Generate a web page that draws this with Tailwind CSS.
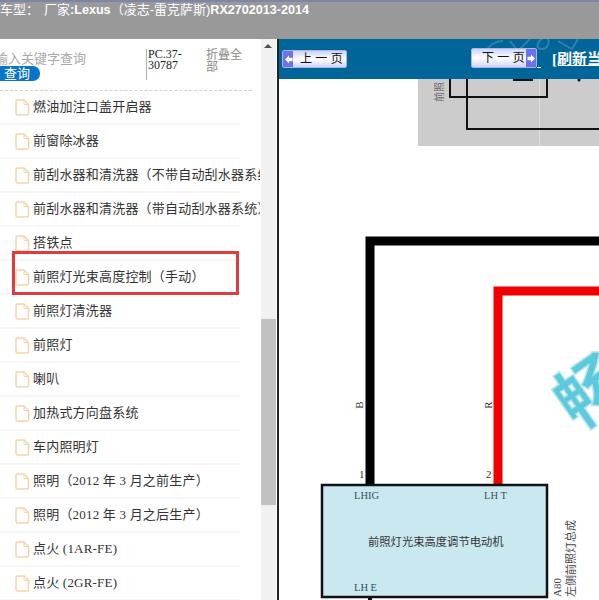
<!DOCTYPE html>
<html lang="zh">
<head>
    <meta charset="UTF-8">
    <title>维修手册</title>
    <script src="https://cdn.jsdelivr.net/npm/@tailwindcss/browser@4"></script>
</head>
<body class="bg-white overflow-hidden font-['Liberation_Sans','Noto_Sans_CJK_SC',sans-serif]">
<div class="w-[599px] h-[600px] flex flex-col overflow-hidden">
    <!-- Top bar -->
    <header class="h-[39px] shrink-0 bg-[#999999] border-t-2 border-[#7c87a8] text-white text-[12.6px] font-bold leading-[15px] whitespace-nowrap">
        <span class="font-normal text-[13px]">车型：</span><span class="font-normal text-[13px] ml-[5px]">厂家</span>:Lexus<span class="font-normal text-[13px]">（凌志-雷克萨斯)</span>RX2702013-2014
    </header>

    <div class="flex flex-1 min-h-0">
        <!-- Sidebar -->
        <aside class="w-[277px] shrink-0 flex relative overflow-hidden">
            <div class="w-[260px] shrink-0 overflow-hidden">
                <div class="h-[52px] w-[252px] border-b border-dashed border-[#cfcfcf] relative">
                    <span class="absolute left-[-5px] top-[12px] text-[13px] leading-[16px] text-[#a9a9a9] whitespace-nowrap">输入关键字查询</span>
                    <span class="absolute left-0 top-[27px] w-[40px] h-[15px] bg-[#0a74c9] rounded-r-[7px] text-white text-[13px] leading-[15px] pl-1">查询</span>
                    <div class="absolute left-[146px] top-[10px] h-[31px] w-[44px] border-l border-[#aab0c8] pl-[1px] font-['Liberation_Serif','Noto_Sans_CJK_SC',serif] text-[12px] leading-[11px] text-[#222]">PC.37-<br>30787</div>
                    <div class="absolute left-[206px] top-[10px] w-[38px] text-[12px] leading-[12px] text-[#8a8a8a]">折叠全部</div>
                </div>
                <ul class="w-[240px] text-[13px] tracking-[0.2px] text-[#333] font-['Liberation_Serif','Noto_Sans_CJK_SC',serif]">
                    <li class="h-[34px] flex items-center gap-[3px] pl-[15px] border-b-2 border-[#f5f5f5] whitespace-nowrap"><svg class="shrink-0" width="15" height="17" viewBox="0 0 15 17" fill="none"><path d="M2.5 1h6.5l4.500 4.500v9a1.500 1.500 0 0 1-1.500 1.500h-9.500a1.500 1.500 0 0 1-1.500-1.500v-12a1.500 1.500 0 0 1 1.500-1.500z" stroke="#f6d3a8" stroke-width="1.500"/><path d="M9 1v4.500h4.500" stroke="#f6d3a8"/></svg><span>燃油加注口盖开启器</span></li>
                    <li class="h-[34px] flex items-center gap-[3px] pl-[15px] border-b-2 border-[#f5f5f5] whitespace-nowrap"><svg class="shrink-0" width="15" height="17" viewBox="0 0 15 17" fill="none"><path d="M2.5 1h6.5l4.500 4.500v9a1.500 1.500 0 0 1-1.500 1.500h-9.500a1.500 1.500 0 0 1-1.500-1.500v-12a1.500 1.500 0 0 1 1.500-1.500z" stroke="#f6d3a8" stroke-width="1.500"/><path d="M9 1v4.500h4.500" stroke="#f6d3a8"/></svg><span>前窗除冰器</span></li>
                    <li class="h-[34px] flex items-center gap-[3px] pl-[15px] border-b-2 border-[#f5f5f5] whitespace-nowrap"><svg class="shrink-0" width="15" height="17" viewBox="0 0 15 17" fill="none"><path d="M2.5 1h6.5l4.500 4.500v9a1.500 1.500 0 0 1-1.500 1.500h-9.500a1.500 1.500 0 0 1-1.500-1.500v-12a1.500 1.500 0 0 1 1.500-1.500z" stroke="#f6d3a8" stroke-width="1.500"/><path d="M9 1v4.500h4.500" stroke="#f6d3a8"/></svg><span>前刮水器和清洗器（不带自动刮水器系统）</span></li>
                    <li class="h-[34px] flex items-center gap-[3px] pl-[15px] border-b-2 border-[#f5f5f5] whitespace-nowrap"><svg class="shrink-0" width="15" height="17" viewBox="0 0 15 17" fill="none"><path d="M2.5 1h6.5l4.500 4.500v9a1.500 1.500 0 0 1-1.500 1.500h-9.500a1.500 1.500 0 0 1-1.500-1.500v-12a1.500 1.500 0 0 1 1.500-1.500z" stroke="#f6d3a8" stroke-width="1.500"/><path d="M9 1v4.500h4.500" stroke="#f6d3a8"/></svg><span>前刮水器和清洗器（带自动刮水器系统）</span></li>
                    <li class="h-[34px] flex items-center gap-[3px] pl-[15px] border-b-2 border-[#f5f5f5] whitespace-nowrap"><svg class="shrink-0" width="15" height="17" viewBox="0 0 15 17" fill="none"><path d="M2.5 1h6.5l4.500 4.500v9a1.500 1.500 0 0 1-1.500 1.500h-9.500a1.500 1.500 0 0 1-1.500-1.500v-12a1.500 1.500 0 0 1 1.500-1.500z" stroke="#f6d3a8" stroke-width="1.500"/><path d="M9 1v4.500h4.500" stroke="#f6d3a8"/></svg><span>搭铁点</span></li>
                    <li class="h-[34px] flex items-center gap-[3px] pl-[15px] border-b-2 border-[#f5f5f5] whitespace-nowrap"><svg class="shrink-0" width="15" height="17" viewBox="0 0 15 17" fill="none"><path d="M2.5 1h6.5l4.500 4.500v9a1.500 1.500 0 0 1-1.500 1.500h-9.500a1.500 1.500 0 0 1-1.500-1.500v-12a1.500 1.500 0 0 1 1.500-1.500z" stroke="#f6d3a8" stroke-width="1.500"/><path d="M9 1v4.500h4.500" stroke="#f6d3a8"/></svg><span>前照灯光束高度控制（手动）</span></li>
                    <li class="h-[34px] flex items-center gap-[3px] pl-[15px] border-b-2 border-[#f5f5f5] whitespace-nowrap"><svg class="shrink-0" width="15" height="17" viewBox="0 0 15 17" fill="none"><path d="M2.5 1h6.5l4.500 4.500v9a1.500 1.500 0 0 1-1.500 1.500h-9.500a1.500 1.500 0 0 1-1.500-1.500v-12a1.500 1.500 0 0 1 1.500-1.500z" stroke="#f6d3a8" stroke-width="1.500"/><path d="M9 1v4.500h4.500" stroke="#f6d3a8"/></svg><span>前照灯清洗器</span></li>
                    <li class="h-[34px] flex items-center gap-[3px] pl-[15px] border-b-2 border-[#f5f5f5] whitespace-nowrap"><svg class="shrink-0" width="15" height="17" viewBox="0 0 15 17" fill="none"><path d="M2.5 1h6.5l4.500 4.500v9a1.500 1.500 0 0 1-1.500 1.500h-9.500a1.500 1.500 0 0 1-1.500-1.500v-12a1.500 1.500 0 0 1 1.500-1.500z" stroke="#f6d3a8" stroke-width="1.500"/><path d="M9 1v4.500h4.500" stroke="#f6d3a8"/></svg><span>前照灯</span></li>
                    <li class="h-[34px] flex items-center gap-[3px] pl-[15px] border-b-2 border-[#f5f5f5] whitespace-nowrap"><svg class="shrink-0" width="15" height="17" viewBox="0 0 15 17" fill="none"><path d="M2.5 1h6.5l4.500 4.500v9a1.500 1.500 0 0 1-1.500 1.500h-9.500a1.500 1.500 0 0 1-1.500-1.500v-12a1.500 1.500 0 0 1 1.500-1.500z" stroke="#f6d3a8" stroke-width="1.500"/><path d="M9 1v4.500h4.500" stroke="#f6d3a8"/></svg><span>喇叭</span></li>
                    <li class="h-[34px] flex items-center gap-[3px] pl-[15px] border-b-2 border-[#f5f5f5] whitespace-nowrap"><svg class="shrink-0" width="15" height="17" viewBox="0 0 15 17" fill="none"><path d="M2.5 1h6.5l4.500 4.500v9a1.500 1.500 0 0 1-1.500 1.500h-9.500a1.500 1.500 0 0 1-1.500-1.500v-12a1.500 1.500 0 0 1 1.500-1.500z" stroke="#f6d3a8" stroke-width="1.500"/><path d="M9 1v4.500h4.500" stroke="#f6d3a8"/></svg><span>加热式方向盘系统</span></li>
                    <li class="h-[34px] flex items-center gap-[3px] pl-[15px] border-b-2 border-[#f5f5f5] whitespace-nowrap"><svg class="shrink-0" width="15" height="17" viewBox="0 0 15 17" fill="none"><path d="M2.5 1h6.5l4.500 4.500v9a1.500 1.500 0 0 1-1.500 1.500h-9.500a1.500 1.500 0 0 1-1.500-1.500v-12a1.500 1.500 0 0 1 1.500-1.500z" stroke="#f6d3a8" stroke-width="1.500"/><path d="M9 1v4.500h4.500" stroke="#f6d3a8"/></svg><span>车内照明灯</span></li>
                    <li class="h-[34px] flex items-center gap-[3px] pl-[15px] border-b-2 border-[#f5f5f5] whitespace-nowrap"><svg class="shrink-0" width="15" height="17" viewBox="0 0 15 17" fill="none"><path d="M2.5 1h6.5l4.500 4.500v9a1.500 1.500 0 0 1-1.500 1.500h-9.500a1.500 1.500 0 0 1-1.500-1.500v-12a1.500 1.500 0 0 1 1.500-1.500z" stroke="#f6d3a8" stroke-width="1.500"/><path d="M9 1v4.500h4.500" stroke="#f6d3a8"/></svg><span>照明（2012 年 3 月之前生产）</span></li>
                    <li class="h-[34px] flex items-center gap-[3px] pl-[15px] border-b-2 border-[#f5f5f5] whitespace-nowrap"><svg class="shrink-0" width="15" height="17" viewBox="0 0 15 17" fill="none"><path d="M2.5 1h6.5l4.500 4.500v9a1.500 1.500 0 0 1-1.500 1.500h-9.500a1.500 1.500 0 0 1-1.500-1.500v-12a1.500 1.500 0 0 1 1.500-1.500z" stroke="#f6d3a8" stroke-width="1.500"/><path d="M9 1v4.500h4.500" stroke="#f6d3a8"/></svg><span>照明（2012 年 3 月之后生产）</span></li>
                    <li class="h-[34px] flex items-center gap-[3px] pl-[15px] border-b-2 border-[#f5f5f5] whitespace-nowrap"><svg class="shrink-0" width="15" height="17" viewBox="0 0 15 17" fill="none"><path d="M2.5 1h6.5l4.500 4.500v9a1.500 1.500 0 0 1-1.500 1.500h-9.500a1.500 1.500 0 0 1-1.500-1.500v-12a1.500 1.500 0 0 1 1.500-1.500z" stroke="#f6d3a8" stroke-width="1.500"/><path d="M9 1v4.500h4.500" stroke="#f6d3a8"/></svg><span>点火 (1AR-FE)</span></li>
                    <li class="h-[34px] flex items-center gap-[3px] pl-[15px] border-b-2 border-[#f5f5f5] whitespace-nowrap"><svg class="shrink-0" width="15" height="17" viewBox="0 0 15 17" fill="none"><path d="M2.5 1h6.5l4.500 4.500v9a1.500 1.500 0 0 1-1.500 1.500h-9.500a1.500 1.500 0 0 1-1.500-1.500v-12a1.500 1.500 0 0 1 1.500-1.500z" stroke="#f6d3a8" stroke-width="1.500"/><path d="M9 1v4.500h4.500" stroke="#f6d3a8"/></svg><span>点火 (2GR-FE)</span></li>
                </ul>
            </div>
            <!-- Scrollbar -->
            <div class="w-[15px] ml-[1px] bg-[#f1f1f1] relative shrink-0">
                <div class="absolute left-[3px] top-[5px] w-0 h-0 border-x-[4px] border-b-[4px] border-x-transparent border-b-[#505050]"></div>
                <div class="absolute left-0 top-[280px] w-[15px] h-[186px] bg-[#c1c1c1]"></div>
            </div>
            <!-- Red highlight -->
            <div class="absolute left-[12px] top-[212px] w-[227px] h-[44px] border-[3px] border-[#e23b3f]"></div>
        </aside>

        <!-- Main content -->
        <main class="flex-1 min-w-0 border-l-2 border-[#222] flex flex-col relative overflow-hidden">
            <div class="h-[40px] shrink-0 bg-[#006699] flex items-center pl-[3px] relative z-10 overflow-hidden">
                <svg class="absolute left-[205px] top-0" width="100" height="14" viewBox="0 0 100 14" fill="none" stroke="#ffffff" stroke-opacity="0.18" stroke-width="2"><path d="M1 14c4-8 10-12 18-12M26 2l8 10 12-12M58 0c-6 4-6 10 0 10 5 0 8-5 6-10M74 2l14 8 6-10"/></svg>
                <button class="w-[65px] h-[18px] shrink-0 flex items-center rounded-[2px] border border-[#aab4ee] bg-gradient-to-b from-[#cfd4f8] via-white to-[#cfd4f8] text-[12px] leading-none text-[#111]">
                    <span class="w-[10px] h-full shrink-0 bg-[#6a73ea] flex items-center justify-center"><svg width="9" height="9" viewBox="0 0 9 9"><path d="M5 .5 1 4.500l4 4V6.300h3.500V2.700H5z" fill="#fff"/></svg></span>
                    <span class="ml-[7px] whitespace-nowrap">上 一 页</span>
                </button>
                <button class="relative top-[-1px] ml-[124px] w-[66px] h-[20px] shrink-0 flex items-center rounded-[2px] border border-[#aab4ee] bg-gradient-to-b from-[#cfd4f8] via-white to-[#cfd4f8] text-[12px] leading-none text-[#111]">
                    <span class="ml-[10px] whitespace-nowrap">下 一 页</span>
                    <span class="ml-auto w-[10px] h-full shrink-0 bg-[#6a73ea] flex items-center justify-center"><svg width="9" height="9" viewBox="0 0 9 9"><path d="M4 .5 8 4.500l-4 4V6.300H.5V2.700H4z" fill="#fff"/></svg></span>
                </button>
                <span class="w-[4px] h-px shrink-0 bg-white self-end mb-[11px]"></span>
                <a class="ml-[11px] shrink-0 text-white underline font-bold text-[15px] whitespace-nowrap font-['Liberation_Serif','Noto_Sans_CJK_SC',serif]">[刷新当前页]</a>
            </div>
            <svg class="flex-1 block" width="320" height="521" viewBox="279 79 320 521" font-family="'Liberation Serif','Noto Sans CJK SC',serif">
                <rect x="418" y="79" width="181" height="67" fill="#cccccc"/>
                <rect x="539" y="79" width="1" height="67" fill="#dedede"/>
                <text transform="translate(443 92) rotate(-90)" font-size="10" fill="#666" text-anchor="middle">前照</text>
                <path d="M450 79v18h97v-18M467 79v50h132" fill="none" stroke="#111" stroke-width="2"/>
                <path d="M513 80h20" stroke="#111" stroke-width="2"/>
                <circle cx="579" cy="80" r="1.500" fill="#111"/>
                <path d="M370 484v-243h229" fill="none" stroke="#000" stroke-width="9"/>
                <path d="M498 484v-193h101" fill="none" stroke="#f00000" stroke-width="9"/>
                <text transform="translate(363 405) rotate(-90)" font-size="11" fill="#333" text-anchor="middle">B</text>
                <text transform="translate(492 405) rotate(-90)" font-size="11" fill="#333" text-anchor="middle">R</text>
                <text x="359" y="478" font-size="11" fill="#333">1</text>
                <text x="486" y="478" font-size="11" fill="#333">2</text>
                <rect x="322" y="485" width="225" height="112" fill="#c9e8f0" stroke="#111" stroke-width="2.500"/>
                <text x="354" y="499" font-size="10.500" fill="#35505c">LHIG</text>
                <text x="484" y="499" font-size="10.500" fill="#35505c">LH  T</text>
                <text x="368" y="546" font-size="11.300" fill="#333">前照灯光束高度调节电动机</text>
                <text x="354" y="591" font-size="10.500" fill="#35505c">LH  E</text>
                <text transform="translate(575 597) rotate(-90)" font-size="11" fill="#444">左侧前照灯总成</text>
                <text transform="translate(561 597) rotate(-90)" font-size="11" fill="#444">A80</text>
                <path d="M370 597v3" stroke="#111" stroke-width="4"/>
                <text transform="translate(606 412) rotate(-35)" font-size="70" font-weight="bold" fill="#5cc9dc" stroke="#b5e3ea" stroke-width="1.500" text-anchor="middle">畅</text>
            </svg>
        </main>
    </div>
</div>
</body>
</html>
